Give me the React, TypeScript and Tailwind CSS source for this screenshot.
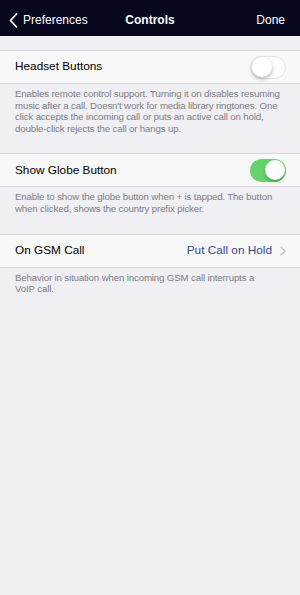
const Toggle = ({ on }: { on: boolean }) => {
  return on ? (
    <div className="flex h-[23px] w-[36px] items-center justify-end rounded-full bg-[#66d36e] p-[1.5px]">
      <div className="h-[20px] w-[20px] rounded-full bg-white shadow-[0_2px_3px_rgba(0,0,0,0.25)]" />
    </div>
  ) : (
    <div className="flex h-[23px] w-[36px] items-center justify-start rounded-full border border-[#e3e3e8] bg-white p-[0.5px]">
      <div className="h-[20px] w-[20px] rounded-full bg-white shadow-[0_2px_4px_rgba(0,0,0,0.3)]" />
    </div>
  );
};

const Row = ({ children }: { children: React.ReactNode }) => (
  <div className="flex h-[34px] items-center justify-between border-y border-[#d8d8dc] bg-[#f8f8f9] pl-[15px] pr-[14px]">
    {children}
  </div>
);

const Footer = ({ children, narrow }: { children: React.ReactNode; narrow?: boolean }) => (
  <p
    className={
      narrow
        ? "pl-[15px] pr-[32px] pt-[4px] pb-[19px] text-[9.7px] leading-[11.6px] tracking-[-0.15px] text-[#7e7e84]"
        : "pl-[15px] pr-[10px] pt-[4px] pb-[19px] text-[9.7px] leading-[11.6px] tracking-[-0.15px] text-[#7e7e84]"
    }
  >
    {children}
  </p>
);

export default function App() {
  return (
    <div className="min-h-[595px] w-[300px] bg-[#efeff4] font-['Liberation_Sans',Arial,sans-serif]">
      {/* nav bar */}
      <header className="relative flex h-[36px] items-center justify-between bg-[#06061d] pl-[9px] pr-[15px] pt-[4px] text-[12px] text-white">
        <div className="flex items-center gap-[5px]">
          <svg width="9" height="15" viewBox="0 0 9 15" fill="none">
            <polyline points="7.5,1 1.5,7.5 7.5,14" stroke="white" strokeWidth="1.8" strokeLinecap="round" strokeLinejoin="round" />
          </svg>
          <span>Preferences</span>
        </div>
        <span className="absolute left-1/2 -translate-x-1/2 font-bold">Controls</span>
        <span>Done</span>
      </header>

      <div className="pt-[14px]">
        <Row>
          <span className="text-[11.8px] text-black">Headset Buttons</span>
          <Toggle on={false} />
        </Row>
        <Footer>
          Enables remote control support. Turning it on disables resuming music after a call. Doesn't
          work for media library ringtones. One click accepts the incoming call or puts an active call on
          hold, double-click rejects the call or hangs up.
        </Footer>

        <Row>
          <span className="text-[11.8px] text-black">Show Globe Button</span>
          <Toggle on />
        </Row>
        <Footer>
          Enable to show the globe button when + is tapped. The button when clicked, shows the country
          prefix picker.
        </Footer>

        <Row>
          <span className="text-[11.8px] text-black">On GSM Call</span>
          <div className="flex items-center gap-[8px]">
            <span className="text-[11.8px] text-[#34488a]">Put Call on Hold</span>
            <svg width="6" height="10" viewBox="0 0 6 10" fill="none">
              <polyline points="1,1 5,5 1,9" stroke="#c4c4c9" strokeWidth="1.3" strokeLinecap="round" strokeLinejoin="round" />
            </svg>
          </div>
        </Row>
        <Footer narrow>Behavior in situation when incoming GSM call interrupts a VoIP call.</Footer>
      </div>
    </div>
  );
}
